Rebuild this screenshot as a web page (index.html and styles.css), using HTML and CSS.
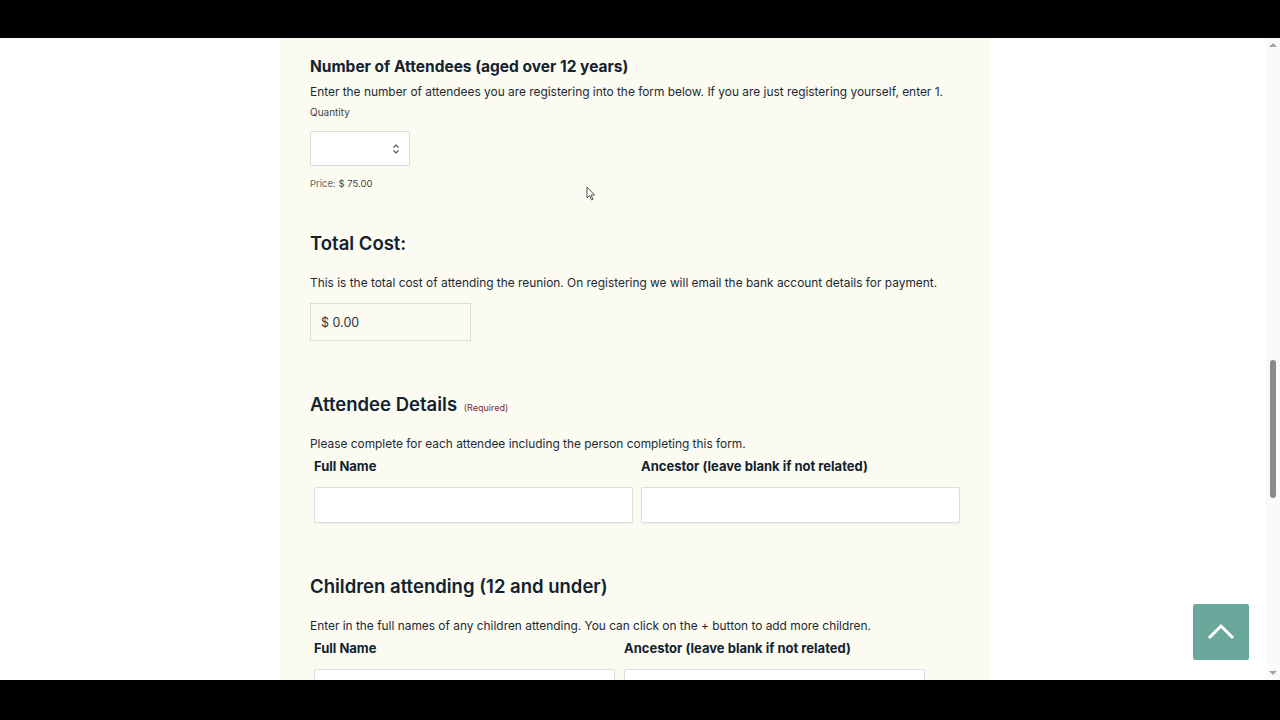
FILE: index.html
```html
<!DOCTYPE html>
<html lang="en">
<head>
  <meta charset="UTF-8" />
  <title>Reunion Registration</title>
  <link rel="stylesheet" href="styles.css">
</head>
<body>
  <div class="screen">
    <div class="bar"></div>

    <div class="viewport">
      <div class="page">
        <div class="panel">

          <section class="field">
            <h3>Number of Attendees (aged over 12 years)</h3>
            <p class="desc">Enter the number of attendees you are registering into the form below. If you are just registering yourself, enter 1.</p>
            <div class="sub-label">Quantity</div>
            <div class="qty-input">
              <svg class="spin" width="8" height="12" viewBox="0 0 8 12">
                <path d="M1.5 4.5 L4 2 L6.5 4.5" fill="none" stroke="#555" stroke-width="1.2" />
                <path d="M1.5 7.5 L4 10 L6.5 7.5" fill="none" stroke="#555" stroke-width="1.2" />
              </svg>
            </div>
            <div class="price">Price: <span class="price-val">$ 75.00</span></div>
          </section>

          <section class="field gap-top">
            <h2>Total Cost:</h2>
            <p class="desc wide">This is the total cost of attending the reunion. On registering we will email the bank account details for payment.</p>
            <div class="total-box">$ 0.00</div>
          </section>

          <section class="field gap-big">
            <h2>Attendee Details <span class="req">(Required)</span></h2>
            <p class="desc wide">Please complete for each attendee including the person completing this form.</p>
            <div class="list-grid">
              <div class="col-head">Full Name</div>
              <div class="col-head">Ancestor (leave blank if not related)</div>
              <input class="list-input" type="text" />
              <input class="list-input" type="text" />
            </div>
          </section>

          <section class="field gap-big">
            <h2>Children attending (12 and under)</h2>
            <p class="desc wide">Enter in the full names of any children attending. You can click on the + button to add more children.</p>
            <div class="list-grid with-buttons">
              <div class="col-head">Full Name</div>
              <div class="col-head">Ancestor (leave blank if not related)</div>
              <input class="list-input" type="text" />
              <input class="list-input" type="text" />
            </div>
          </section>

        </div>
      </div>

      <div class="scrollbar">
        <div class="arrow up"></div>
        <div class="track"><div class="thumb"></div></div>
        <div class="arrow down"></div>
      </div>

      <a class="to-top" href="#">
        <svg width="28" height="18" viewBox="0 0 28 18">
          <path d="M2 15 L14 3 L26 15" fill="none" stroke="#fff" stroke-width="3" />
        </svg>
      </a>

      <svg class="cursor" width="10" height="15" viewBox="0 0 10 15">
        <path d="M1 1 L1 12 L3.5 9.5 L5.5 14 L7 13.3 L5 9 L8.5 9 Z" fill="#fff" stroke="#555" stroke-width="1" />
      </svg>
    </div>

    <div class="bar bottom"></div>
  </div>
</body>
</html>
```

FILE: styles.css
```css
body {
  margin: 0;
  background: #000;
  font-family: Inter, "Open Sans", sans-serif;
  color: #17232e;
}

.screen {
  width: 1280px;
  height: 720px;
  display: flex;
  flex-direction: column;
}

.bar {
  height: 38px;
  background: #000;
}

.bar.bottom {
  height: 40px;
}

.viewport {
  position: relative;
  height: 642px;
  background: #fff;
  display: flex;
  overflow: hidden;
}

.page {
  flex: 1;
  overflow: hidden;
}

.panel {
  width: 650px;
  margin-left: 280px;
  padding: 18px 30px 0;
  background: #fbfbf2;
  height: 100%;
}

.field h3 {
  margin: 0;
  font-size: 15.5px;
  line-height: 22px;
  font-weight: 700;
  color: #13222f;
}

.field h2 {
  margin: 0;
  font-size: 18.5px;
  line-height: 24px;
  font-weight: 600;
  color: #13222f;
}

.req {
  font-size: 9px;
  line-height: 0;
  font-weight: 400;
  color: #7b2a35;
  margin-left: 2px;
}

.desc {
  margin: 4px 0 0;
  font-size: 11.9px;
  line-height: 20px;
  color: #1d2a33;
  white-space: nowrap;
}

.desc.wide {
  margin-top: 18px;
}

.sub-label {
  margin-top: 3px;
  font-size: 10px;
  line-height: 14px;
  color: #444;
}

.qty-input {
  margin-top: 12px;
  width: 89px;
  height: 33px;
  background: #fff;
  border: 1px solid #ddd;
  border-radius: 2px;
  display: flex;
  align-items: center;
  justify-content: flex-end;
  padding-right: 9px;
}

.price {
  margin-top: 11px;
  font-size: 9.5px;
  line-height: 14px;
  color: #666;
}

.price-val {
  color: #444;
}

.gap-top {
  margin-top: 40px;
}

.gap-big {
  margin-top: 51px;
}

.total-box {
  margin-top: 10px;
  width: 149px;
  height: 36px;
  border: 1px solid #dcdcd4;
  padding-left: 10px;
  display: flex;
  align-items: center;
  font-size: 12.5px;
  color: #333;
}

.list-grid {
  display: grid;
  grid-template-columns: 1fr 1fr;
  column-gap: 8px;
  row-gap: 12px;
  padding: 3px 0 0 4px;
}

.list-grid.with-buttons {
  column-gap: 9px;
  padding-right: 35px;
}

.col-head {
  font-size: 13px;
  line-height: 18px;
  font-weight: 700;
  color: #13222f;
}

.list-input {
  height: 36px;
  margin: 0;
  border: 1px solid #dedede;
  border-radius: 2px;
  background: #fff;
  box-shadow: 0 1px 2px rgba(0, 0, 0, 0.06);
  box-sizing: border-box;
}

.scrollbar {
  width: 14px;
  background: #fafafa;
  display: flex;
  flex-direction: column;
  align-items: center;
}

.arrow {
  width: 0;
  height: 0;
  border-left: 4px solid transparent;
  border-right: 4px solid transparent;
  margin: 5px 0;
}

.arrow.up {
  border-bottom: 4px solid #a3a3a3;
}

.arrow.down {
  border-top: 4px solid #a3a3a3;
}

.track {
  flex: 1;
  width: 100%;
  display: flex;
  justify-content: center;
}

.thumb {
  width: 6px;
  height: 138px;
  margin-top: 308px;
  background: #8a8a8a;
  border-radius: 3px;
}

.to-top {
  position: absolute;
  left: 1193px;
  top: 566px;
  width: 56px;
  height: 56px;
  background: #69a89b;
  border-radius: 2px;
  display: flex;
  align-items: center;
  justify-content: center;
}

.cursor {
  position: absolute;
  left: 586px;
  top: 148px;
}
```
